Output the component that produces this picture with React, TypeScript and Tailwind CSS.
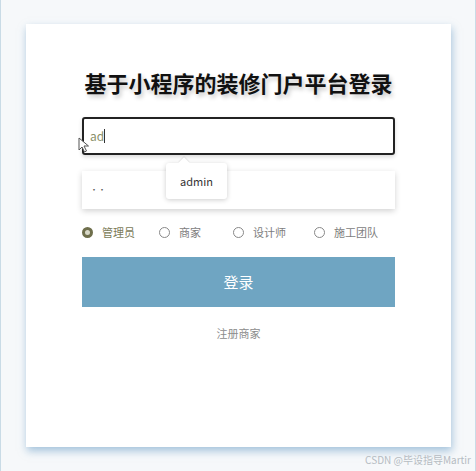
import React from 'react';

const roles = ['管理员', '商家', '设计师', '施工团队'];

export default function App() {
  return (
    <div
      className="relative w-[476px] h-[471px] overflow-hidden bg-[#f6f8fa] border-x border-[#c9dbe6]"
      style={{ fontFamily: '"Noto Sans CJK SC", "Noto Sans", sans-serif' }}
    >
      {/* Card */}
      <div className="absolute left-[25px] top-[24px] w-[425px] h-[423px] bg-white shadow-[1px_4px_8px_rgba(110,160,200,0.6)] px-14 pt-[43px]">
        <h1 className="text-center text-[22px] leading-[31px] font-bold text-[#111] [text-shadow:2px_3px_4px_rgba(0,0,0,0.22)]">
          基于小程序的装修门户平台登录
        </h1>

        <div className="relative mt-[19px]">
          {/* Username */}
          <div className="h-[38px] border-2 border-[#222] rounded-[3px] flex items-center pl-[6px] shadow-[0_2px_4px_rgba(0,0,0,0.15)]">
            <span className="text-[12px] text-[#8a8f6a]">ad</span>
            <span className="w-px h-[14px] bg-[#333]" />
          </div>

          {/* mouse pointer */}
          <svg className="absolute left-[-4px] top-[20px]" width="13" height="16" viewBox="0 0 13 16">
            <path d="M1 1 L1 13 L4 10 L6.5 15 L8.5 14 L6 9 L10.5 9 Z" fill="#fff" stroke="#555" strokeWidth="1" strokeLinejoin="round" />
          </svg>

          {/* Password */}
          <div className="mt-[16px] h-[38px] flex items-center pl-[8px] bg-white shadow-[0_2px_6px_rgba(0,0,0,0.18)]">
            <span className="text-[8px] text-[#555] tracking-[0px]">••</span>
          </div>

          {/* Autocomplete popup */}
          <div className="absolute left-[84px] top-[46px] w-[61px] h-[36px] bg-white rounded-[3px] shadow-[0_1px_5px_rgba(0,0,0,0.2)] flex items-center justify-center">
            <span className="text-[11px] text-[#333]">admin</span>
            <div className="absolute left-[14px] top-[-4px] w-[8px] h-[8px] bg-white rotate-45 shadow-[-1px_-1px_1px_rgba(0,0,0,0.08)]" />
          </div>
        </div>

        {/* Roles */}
        <div className="mt-[15px] flex items-center h-[16px] text-[11px] text-[#7d7d7d]">
          {roles.map((r, i) => (
            <label
              key={r}
              className={
                'flex items-center gap-[9px] ' +
                (i === 0 ? 'w-[77px] ' : i === 1 ? 'w-[74px] ' : i === 2 ? 'w-[81px] ' : '')
              }
            >
              {i === 0 ? (
                <span className="w-[11px] h-[11px] rounded-full border-[3px] border-[#6f6f4c] bg-[#d9d9c8]" />
              ) : (
                <span className="w-[11px] h-[11px] rounded-full border border-[#888]" />
              )}
              <span className={i === 0 ? 'text-[#7b7b58]' : ''}>{r}</span>
            </label>
          ))}
        </div>

        {/* Login button */}
        <button className="mt-[17px] w-full h-[50px] bg-[#6fa5c2] text-white text-[15px]">
          登录
        </button>

        <div className="mt-[18px] text-center text-[11px] text-[#8c8c8c]">注册商家</div>
      </div>

      {/* Watermark */}
      <div className="absolute right-[4px] bottom-[4px] text-[10px] text-[#b5bcc2]">
        CSDN @毕设指导Martir
      </div>
    </div>
  );
}
